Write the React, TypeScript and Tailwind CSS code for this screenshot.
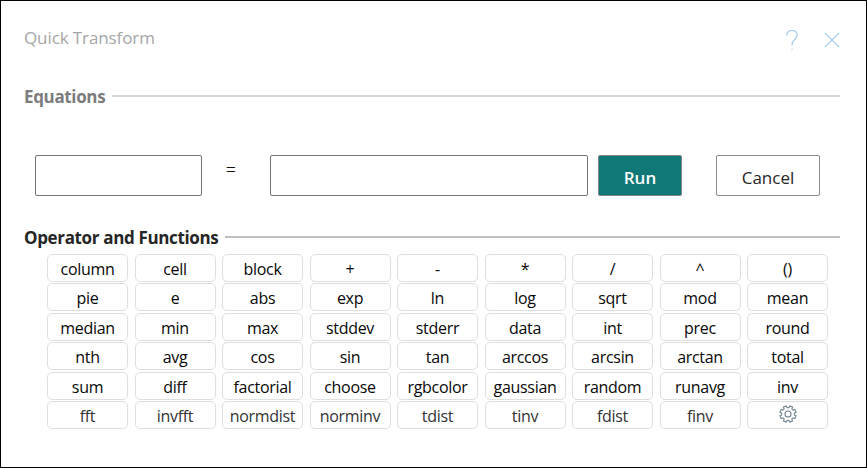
import React from 'react';

type Label = string;

const rows: Label[][] = [
  ['column', 'cell', 'block', '+', '-', '*', '/', '^', '()'],
  ['pie', 'e', 'abs', 'exp', 'ln', 'log', 'sqrt', 'mod', 'mean'],
  ['median', 'min', 'max', 'stddev', 'stderr', 'data', 'int', 'prec', 'round'],
  ['nth', 'avg', 'cos', 'sin', 'tan', 'arccos', 'arcsin', 'arctan', 'total'],
  ['sum', 'diff', 'factorial', 'choose', 'rgbcolor', 'gaussian', 'random', 'runavg', 'inv'],
  ['fft', 'invfft', 'normdist', 'norminv', 'tdist', 'tinv', 'fdist', 'finv', 'settings'],
];

function gearOutline(): string {
  const points: string[] = [];
  for (let tooth = 0; tooth < 8; tooth++) {
    const corners: [number, number][] = [
      [-14, 6.4],
      [-11, 8.3],
      [11, 8.3],
      [14, 6.4],
    ];
    for (const [offset, radius] of corners) {
      const angle = ((tooth * 45 + 22.5 + offset) * Math.PI) / 180;
      points.push(`${(9 + radius * Math.cos(angle)).toFixed(2)} ${(9 + radius * Math.sin(angle)).toFixed(2)}`);
    }
  }
  return `M${points.join('L')}Z`;
}

function Gear() {
  return (
    <svg width="18" height="18" viewBox="0 0 18 18" fill="none" stroke="#71838e" strokeWidth="1.1" strokeLinejoin="round">
      <path d={gearOutline()} />
      <circle cx="9" cy="9" r="3" />
    </svg>
  );
}

function Key({ label, last }: { label: Label; last: boolean }) {
  return (
    <button
      aria-label={label}
      className={`flex h-[28px] w-[81px] items-center justify-center rounded-[5px] border border-[#dfdfdf] bg-white text-[16px] leading-[22px] tracking-[-0.3px] whitespace-nowrap ${last ? 'text-[#333333]' : 'text-[#080808]'}`}
    >
      {label === 'settings' ? (
        <span className="-mt-[2px]"><Gear /></span>
      ) : (
        <span className="pt-[2px]">{label}</span>
      )}
    </button>
  );
}

export default function App() {
  return (
    <main className="h-[468px] w-[867px] overflow-hidden border border-black bg-white font-['Open_Sans','Noto_Sans',sans-serif]">
      <header className="flex h-[75px] items-center justify-between pl-[23px] pr-[26px]">
        <h1 className="pb-[2px] text-[17px] leading-6 tracking-[-0.1px] text-[#a6a6a6]">Quick Transform</h1>
        <div className="flex items-center gap-[25px] pt-[3px]">
          <svg width="14" height="22" viewBox="0 0 14 22" fill="none" stroke="#9dc6ef" strokeWidth="1.1">
            <path d="M1.6 6.4C1.6 3.2 3.9 1.5 6.8 1.5C10 1.5 12.2 3.4 12.2 6.2C12.2 10.4 7.1 10.7 7.1 14.8V16.6M7.1 19.7V21" />
          </svg>
          <svg width="16" height="16" viewBox="0 0 16 16" fill="none" stroke="#9dc6ef" strokeWidth="1.1">
            <path d="M.8.8L15.2 15.2M15.2.8L.8 15.2" />
          </svg>
        </div>
      </header>

      <div className="flex h-[41px] items-center gap-[6px] pl-[23px] pr-[26px]">
        <h2 className="w-[82px] text-[17px] leading-6 font-bold tracking-[-0.35px] whitespace-nowrap text-[#7c7c7c]">Equations</h2>
        <div className="mb-[2px] h-[2px] flex-1 bg-[#d8d8d8]" />
      </div>

      <div className="mt-[38px] flex h-[41px] pl-[34px]">
        <div className="h-[41px] w-[167px] rounded-[2px] border border-[#737373]" />
        <div className="w-[68px] pt-[2px] pr-[10px] text-center text-[18px] leading-[24px] font-light text-[#111111]">=</div>
        <div className="h-[41px] w-[318px] rounded-[2px] border border-[#737373]" />
        <button className="ml-[10px] h-[41px] w-[84px] rounded-[2px] border border-[#858585] bg-[#117878] pt-[4px] text-[17px] leading-6 font-semibold text-white">Run</button>
        <button className="ml-[34px] h-[41px] w-[104px] rounded-[2px] border border-[#8a8a8a] bg-white pt-[4px] text-[17px] leading-6 text-[#262626]">Cancel</button>
      </div>

      <div className="mt-[29px] flex h-[26px] items-center gap-[6px] pl-[23px] pr-[26px]">
        <h2 className="w-[195px] text-[17px] leading-6 font-bold tracking-[-0.35px] whitespace-nowrap text-[#262626]">Operator and Functions</h2>
        <div className="mb-[3px] h-[2px] flex-1 bg-[#bfbfbf]" />
      </div>

      <div className="mt-[3px] grid grid-cols-[repeat(9,81px)] gap-x-[6.5px] gap-y-[1.4px] pl-[46px]">
        {rows.map((row, rowIndex) =>
          row.map((label) => <Key key={label} label={label} last={rowIndex === rows.length - 1} />),
        )}
      </div>
    </main>
  );
}
